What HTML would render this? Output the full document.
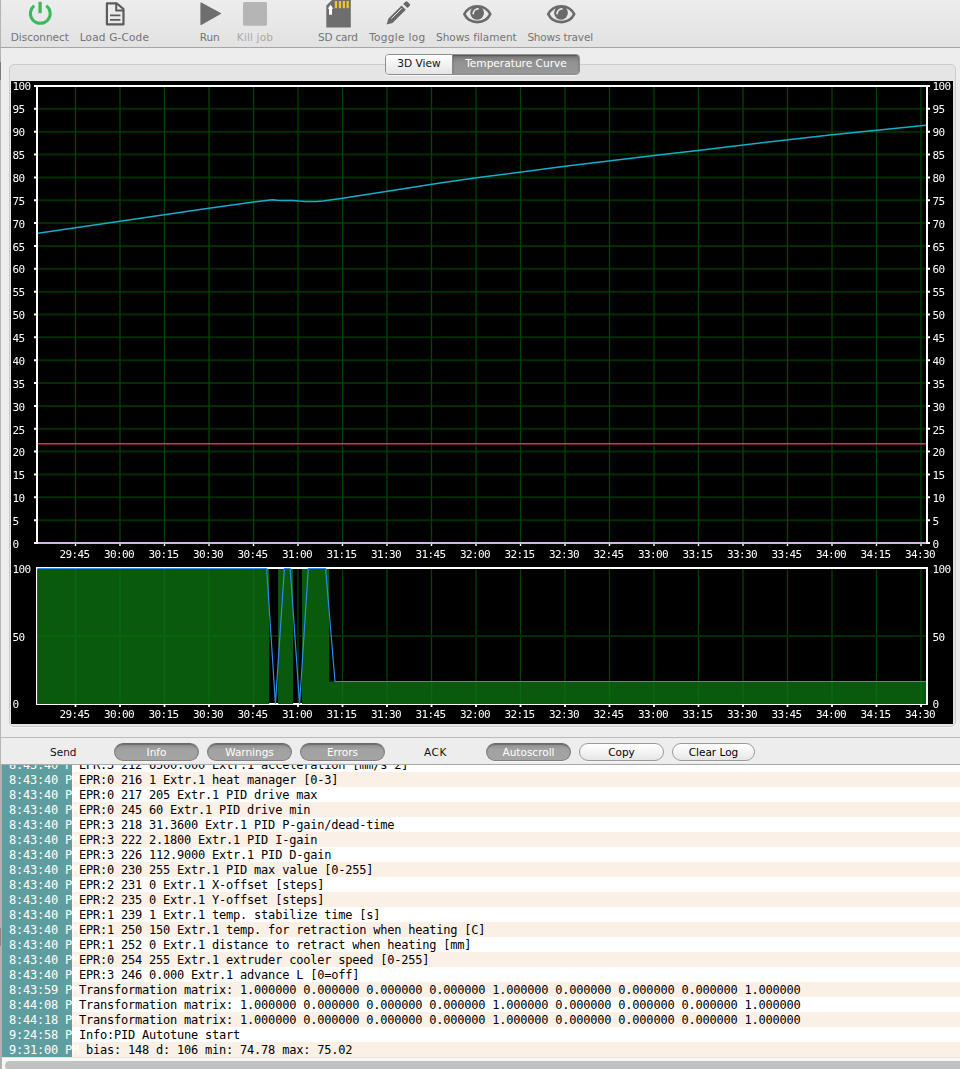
<!DOCTYPE html>
<html lang="en"><head><meta charset="utf-8"><title>Repetier-Host Temperature Curve</title>
<style>
html,body{margin:0;padding:0;}
body{width:960px;height:1069px;overflow:hidden;background:#ededed;position:relative;font-family:"DejaVu Sans", "Liberation Sans", sans-serif;font-size:10.5px;color:#000;}
.abs{position:absolute;}
#toolbar{left:0;top:0;width:960px;height:47px;background:linear-gradient(#ededed,#e2e2e2);border-bottom:1px solid #a6a6a6;}
#edge{left:0;top:0;width:1px;height:1069px;background:#b4b4b4;}
#edge3{left:0;top:62px;width:1px;height:18px;background:#7a7a7a;}
#edge4{left:0;top:928px;width:1px;height:18px;background:#858585;}
#edge2{left:0;top:764px;width:2px;height:305px;background:#b2b2b2;}
.tl{position:absolute;top:30px;height:14px;line-height:14px;white-space:nowrap;color:#747474;text-align:center;transform:translateX(-50%);}
.tl.dis{color:#a9a9a9;}
#group{left:9px;top:64px;width:945px;height:661px;border:1px solid #cbcbcb;border-radius:5px;background:#e5e5e5;box-shadow:0 1px 0 #f6f6f6;}
#seg{left:385px;top:54px;width:195px;height:21px;border-radius:4px;border:1px solid #8e8e8e;box-sizing:border-box;overflow:hidden;box-shadow:0 1px 0 rgba(255,255,255,.7);}
#seg .a{position:absolute;left:0;top:0;width:66px;height:19px;background:linear-gradient(#ffffff,#f2f2f2 50%,#e4e4e4);border-right:1px solid #8a8a8a;text-align:center;line-height:17px;font-size:10.6px;color:#111;}
#seg .b{position:absolute;left:67px;top:0;width:126px;height:19px;background:linear-gradient(#787878,#939393 40%,#989898);text-align:center;line-height:17px;font-size:10.6px;color:#fff;box-shadow:inset 0 1px 2px rgba(0,0,0,.35);}
#chart{left:11px;top:81px;width:942px;height:643px;background:#000;}
#sep{left:1px;top:737px;width:959px;height:1px;background:#bcbcbc;}
.pill{position:absolute;top:743px;height:18px;box-sizing:border-box;border-radius:9px;text-align:center;line-height:15px;padding-top:1px;font-size:10.5px;white-space:nowrap;}
.pill.on{background:linear-gradient(#8f8f8f,#a2a2a2 35%,#a4a4a4);border:1px solid #7e7e7e;border-top-color:#6a6a6a;color:#fff;box-shadow:inset 0 1px 1px rgba(0,0,0,.25),0 1px 0 rgba(255,255,255,.6);}
.pill.off{background:linear-gradient(#ffffff,#f4f4f4 50%,#e6e6e6);border:1px solid #9b9b9b;color:#000;box-shadow:0 1px 0 rgba(255,255,255,.6);}
.lbl{position:absolute;top:745px;height:14px;line-height:14px;white-space:nowrap;color:#111;}
#logtop{left:1px;top:764px;width:959px;height:1px;background:#a9a9a9;}
#log{left:2px;top:765px;width:958px;height:292px;overflow:hidden;background:#fff;}
.row{position:absolute;left:0;width:958px;height:15px;font-family:"DejaVu Sans Mono", "Liberation Mono", monospace;font-size:12px;letter-spacing:-0.22px;line-height:15px;white-space:pre;}
.row.p{background:#faf0e6;}
.row .t{position:absolute;left:0;top:0;width:70px;height:15px;background:#5f9ea0;}
.row .tt{position:absolute;left:7px;top:1px;color:#fff;}
.row .m{position:absolute;left:77px;top:1px;color:#000;}
#hs{left:1px;top:1057px;width:959px;height:12px;background:#f7f7f7;border-top:1px solid #e4e4e4;box-sizing:border-box;}
#hs i{position:absolute;left:4px;top:3px;width:970px;height:9px;border-radius:5px;background:#c1c1c1;}
</style></head><body>
<div class="abs" id="toolbar"></div>

<svg class="abs" style="left:0;top:0" width="960" height="48" viewBox="0 0 960 48">
 <!-- power -->
 <g fill="none" stroke="#3cb95e" stroke-width="3" stroke-linecap="butt">
  <path d="M34.3 5.6 A9.9 9.9 0 1 0 46.3 5.6"/>
  <path d="M40.1 1.8 V13.2" stroke-width="3.3"/>
 </g>
 <!-- document -->
 <g fill="none" stroke="#5c5c5c" stroke-width="2.2" stroke-linejoin="round">
  <path d="M106.9 3.4 H116.7 L123.5 9 V24.3 H106.9 Z"/>
  <path d="M116.2 3.4 V10.6 H123.5" stroke-width="2"/>
  <path d="M110 15.4 H120.4 M110 19.8 H120.4" stroke-width="1.7"/>
 </g>
 <!-- run -->
 <path d="M201 3 L220.4 13.6 L201 24.4 Z" fill="#6e6e6e" stroke="#6e6e6e" stroke-width="1.2" stroke-linejoin="round"/>
 <!-- kill -->
 <rect x="243" y="2" width="24" height="23.8" rx="1.5" fill="#b5b5b5"/>
 <!-- sd card -->
 <path d="M332 0 H350.8 V27.5 H326.3 V5.6 Z" fill="#6e6e6e"/>
 <g fill="#f1c232">
  <rect x="334.8" y="1" width="2.3" height="7.2"/><rect x="338.8" y="1" width="2.3" height="7.2"/>
  <rect x="342.7" y="1" width="2.3" height="7.2"/><rect x="346.5" y="1" width="2.3" height="7.2"/>
 </g>
 <path d="M330.5 4.7 L333.3 8.8 H332 V14.8 H329 V8.8 H327.8 Z" fill="#fff"/>
 <!-- pencil -->
 <g transform="translate(386.7 24.6) rotate(-45)">
  <path d="M0 0 L5.2 -3 H24 V3 H5.2 Z" fill="#686868"/>
  <path d="M26.3 -3 H29.4 Q30.9 -3 30.9 -1.5 V1.5 Q30.9 3 29.4 3 H26.3 Z" fill="#686868"/>
  <path d="M7.5 -0.9 H22.3" stroke="#f2f2f2" stroke-width="0.9"/>
 </g>
 <!-- eyes -->
 <g id="eye1">
  <path d="M464.3 14.15 A14.6 14.6 0 0 1 490.3 14.15 A14.6 14.6 0 0 1 464.3 14.15 Z" fill="none" stroke="#6a6a6a" stroke-width="2.6" stroke-linejoin="round"/>
  <circle cx="477.1" cy="12.8" r="6.9" fill="#6a6a6a"/>
  <path d="M473.2 13.6 A5 5 0 0 1 478 8.9" fill="none" stroke="#ededed" stroke-width="1.7" stroke-linecap="round"/>
 </g>
 <g transform="translate(83.9 0)">
  <path d="M464.3 14.15 A14.6 14.6 0 0 1 490.3 14.15 A14.6 14.6 0 0 1 464.3 14.15 Z" fill="none" stroke="#6a6a6a" stroke-width="2.6" stroke-linejoin="round"/>
  <circle cx="477.1" cy="12.8" r="6.9" fill="#6a6a6a"/>
  <path d="M473.2 13.6 A5 5 0 0 1 478 8.9" fill="none" stroke="#ededed" stroke-width="1.7" stroke-linecap="round"/>
 </g>
</svg>

<div class="tl" style="left:39.78px;letter-spacing:-0.03px">Disconnect</div><div class="tl" style="left:114.4px;letter-spacing:0.19px">Load G-Code</div><div class="tl" style="left:209.65px;letter-spacing:-0.2px">Run</div><div class="tl dis" style="left:254.98px;letter-spacing:0.16px">Kill job</div><div class="tl" style="left:337.9px;letter-spacing:-0.2px">SD card</div><div class="tl" style="left:397.37px;letter-spacing:0.33px">Toggle log</div><div class="tl" style="left:476.35px;letter-spacing:0.01px">Shows filament</div><div class="tl" style="left:560.16px;letter-spacing:-0.17px">Shows travel</div>
<div class="abs" id="group"></div>
<div class="abs" id="seg"><div class="a">3D View</div><div class="b">Temperature Curve</div></div>
<svg class="abs" id="chart" width="942" height="643" viewBox="11 81 942 643" font-family='"DejaVu Sans Mono","Liberation Mono",monospace' font-size="11" letter-spacing="-0.6" fill="#fff">
<path d="M38 108.85H926M38 131.7H926M38 154.55H926M38 177.4H926M38 200.25H926M38 223.1H926M38 245.95H926M38 268.8H926M38 291.65H926M38 314.5H926M38 337.35H926M38 360.2H926M38 383.05H926M38 405.9H926M38 428.75H926M38 451.6H926M38 474.45H926M38 497.3H926M38 520.15H926" stroke="#002e00" stroke-width="2" fill="none"/>
<path d="M75.5 87V542M120 87V542M164.5 87V542M209 87V542M253.5 87V542M298 87V542M342.5 87V542M387 87V542M431.5 87V542M476 87V542M520.5 87V542M565 87V542M609.5 87V542M654 87V542M698.5 87V542M743 87V542M787.5 87V542M832 87V542M876.5 87V542M921 87V542" stroke="#004200" stroke-width="1.3" fill="none"/>
<path d="M38 443.8H926" stroke="#df2f5f" stroke-width="1.6" fill="none"/>
<polyline points="38,233.3 120,221.3 200,209.4 253.75,202 268,200.2 272.5,199.8 277,200.2 282.5,200.5 292.5,200.5 299,201.1 305,201.5 316.25,201.5 323,200.9 330,200 342.5,198.25 387.5,191.25 440,183.1 476.6,177.7 565.1,166.3 654,155.5 700,150.2 743.3,145 832.2,134.7 926,125.2" stroke="#13afc9" stroke-width="1.5" fill="none" stroke-linejoin="round"/>
<path d="M34 86H930M37 85V544M927 85V544" stroke="#fff" stroke-width="2" fill="none"/>
<path d="M38 543H926" stroke="#d3b3ec" stroke-width="2" fill="none"/>
<path d="M34 108.85H36M928 108.85H930M34 131.7H36M928 131.7H930M34 154.55H36M928 154.55H930M34 177.4H36M928 177.4H930M34 200.25H36M928 200.25H930M34 223.1H36M928 223.1H930M34 245.95H36M928 245.95H930M34 268.8H36M928 268.8H930M34 291.65H36M928 291.65H930M34 314.5H36M928 314.5H930M34 337.35H36M928 337.35H930M34 360.2H36M928 360.2H930M34 383.05H36M928 383.05H930M34 405.9H36M928 405.9H930M34 428.75H36M928 428.75H930M34 451.6H36M928 451.6H930M34 474.45H36M928 474.45H930M34 497.3H36M928 497.3H930M34 520.15H36M928 520.15H930M34 543H36M928 543H930" stroke="#fff" stroke-width="2" fill="none"/>
<path d="M75.5 544V546M120 544V546M164.5 544V546M209 544V546M253.5 544V546M298 544V546M342.5 544V546M387 544V546M431.5 544V546M476 544V546M520.5 544V546M565 544V546M609.5 544V546M654 544V546M698.5 544V546M743 544V546M787.5 544V546M832 544V546M876.5 544V546M921 544V546" stroke="#fff" stroke-width="1.4" fill="none"/>
<path d="M75.5 569V703M120 569V703M164.5 569V703M209 569V703M253.5 569V703M298 569V703M342.5 569V703M387 569V703M431.5 569V703M476 569V703M520.5 569V703M565 569V703M609.5 569V703M654 569V703M698.5 569V703M743 569V703M787.5 569V703M832 569V703M876.5 569V703M921 569V703" stroke="#004200" stroke-width="1.3" fill="none"/>
<path d="M38 636H926" stroke="#002e00" stroke-width="2" fill="none"/>
<path d="M37.5 569 H269.2 V704 H37.5Z M278.1 569 H293.1 V704 H278.1Z M302 569 H329.2 V681.5 H926.6 V704 H302Z" fill="rgba(13,115,18,0.78)"/>
<path d="M36 568H928M927 567V705" stroke="#fff" stroke-width="2" fill="none"/>
<path d="M36.6 567V705M36 704.5H928" stroke="#fff" stroke-width="1.2" fill="none"/>
<path d="M269.2 703.5H278.1M293.1 703.5H302" stroke="#fff" stroke-width="1" fill="none"/>
<path d="M75.5 705V707M120 705V707M164.5 705V707M209 705V707M253.5 705V707M298 705V707M342.5 705V707M387 705V707M431.5 705V707M476 705V707M520.5 705V707M565 705V707M609.5 705V707M654 705V707M698.5 705V707M743 705V707M787.5 705V707M832 705V707M876.5 705V707M921 705V707" stroke="#fff" stroke-width="1.8" fill="none"/>
<polyline points="37.5,568.5 266.7,568.5 275.4,704 284.4,568.5 290.2,568.5 299.6,704 308.3,568.5 325.6,568.5 335,681.5 926,681.5" stroke="#2a8cec" stroke-width="1.2" fill="none" stroke-linejoin="miter"/>
<g style="filter:grayscale(1)">
<text x="12.4" y="90">100</text><text x="932.4" y="90">100</text>
<text x="12.4" y="113">95</text><text x="932.4" y="113">95</text>
<text x="12.4" y="136">90</text><text x="932.4" y="136">90</text>
<text x="12.4" y="159">85</text><text x="932.4" y="159">85</text>
<text x="12.4" y="182">80</text><text x="932.4" y="182">80</text>
<text x="12.4" y="205">75</text><text x="932.4" y="205">75</text>
<text x="12.4" y="228">70</text><text x="932.4" y="228">70</text>
<text x="12.4" y="251">65</text><text x="932.4" y="251">65</text>
<text x="12.4" y="273">60</text><text x="932.4" y="273">60</text>
<text x="12.4" y="296">55</text><text x="932.4" y="296">55</text>
<text x="12.4" y="319">50</text><text x="932.4" y="319">50</text>
<text x="12.4" y="342">45</text><text x="932.4" y="342">45</text>
<text x="12.4" y="365">40</text><text x="932.4" y="365">40</text>
<text x="12.4" y="388">35</text><text x="932.4" y="388">35</text>
<text x="12.4" y="411">30</text><text x="932.4" y="411">30</text>
<text x="12.4" y="434">25</text><text x="932.4" y="434">25</text>
<text x="12.4" y="456">20</text><text x="932.4" y="456">20</text>
<text x="12.4" y="479">15</text><text x="932.4" y="479">15</text>
<text x="12.4" y="502">10</text><text x="932.4" y="502">10</text>
<text x="12.4" y="525">5</text><text x="932.4" y="525">5</text>
<text x="12.4" y="548">0</text><text x="932.4" y="548">0</text>
<text x="74.5" y="558" text-anchor="middle">29:45</text>
<text x="119" y="558" text-anchor="middle">30:00</text>
<text x="163.5" y="558" text-anchor="middle">30:15</text>
<text x="208" y="558" text-anchor="middle">30:30</text>
<text x="252.5" y="558" text-anchor="middle">30:45</text>
<text x="297" y="558" text-anchor="middle">31:00</text>
<text x="341.5" y="558" text-anchor="middle">31:15</text>
<text x="386" y="558" text-anchor="middle">31:30</text>
<text x="430.5" y="558" text-anchor="middle">31:45</text>
<text x="475" y="558" text-anchor="middle">32:00</text>
<text x="519.5" y="558" text-anchor="middle">32:15</text>
<text x="564" y="558" text-anchor="middle">32:30</text>
<text x="608.5" y="558" text-anchor="middle">32:45</text>
<text x="653" y="558" text-anchor="middle">33:00</text>
<text x="697.5" y="558" text-anchor="middle">33:15</text>
<text x="742" y="558" text-anchor="middle">33:30</text>
<text x="786.5" y="558" text-anchor="middle">33:45</text>
<text x="831" y="558" text-anchor="middle">34:00</text>
<text x="875.5" y="558" text-anchor="middle">34:15</text>
<text x="920" y="558" text-anchor="middle">34:30</text>
<text x="12.4" y="573">100</text><text x="932.4" y="573">100</text>
<text x="12.4" y="641">50</text><text x="932.4" y="641">50</text>
<text x="12.4" y="708">0</text><text x="932.4" y="708">0</text>
<text x="74.5" y="718" text-anchor="middle">29:45</text>
<text x="119" y="718" text-anchor="middle">30:00</text>
<text x="163.5" y="718" text-anchor="middle">30:15</text>
<text x="208" y="718" text-anchor="middle">30:30</text>
<text x="252.5" y="718" text-anchor="middle">30:45</text>
<text x="297" y="718" text-anchor="middle">31:00</text>
<text x="341.5" y="718" text-anchor="middle">31:15</text>
<text x="386" y="718" text-anchor="middle">31:30</text>
<text x="430.5" y="718" text-anchor="middle">31:45</text>
<text x="475" y="718" text-anchor="middle">32:00</text>
<text x="519.5" y="718" text-anchor="middle">32:15</text>
<text x="564" y="718" text-anchor="middle">32:30</text>
<text x="608.5" y="718" text-anchor="middle">32:45</text>
<text x="653" y="718" text-anchor="middle">33:00</text>
<text x="697.5" y="718" text-anchor="middle">33:15</text>
<text x="742" y="718" text-anchor="middle">33:30</text>
<text x="786.5" y="718" text-anchor="middle">33:45</text>
<text x="831" y="718" text-anchor="middle">34:00</text>
<text x="875.5" y="718" text-anchor="middle">34:15</text>
<text x="920" y="718" text-anchor="middle">34:30</text>
</g>
</svg>
<div class="abs" id="sep"></div>
<div class="lbl" style="left:50px">Send</div>
<div class="lbl" style="left:424px;letter-spacing:0.6px">ACK</div>
<div class="pill on" style="left:114px;width:85px">Info</div><div class="pill on" style="left:207px;width:85px">Warnings</div><div class="pill on" style="left:300px;width:85px">Errors</div><div class="pill on" style="left:486px;width:85px">Autoscroll</div><div class="pill off" style="left:579px;width:85px">Copy</div><div class="pill off" style="left:672px;width:83px">Clear Log</div>
<div class="abs" id="logtop"></div>
<div class="abs" id="log">
<div class="row" style="top:-8px"><span class="t"></span><span class="tt">8:43:40 PM</span><span class="m">EPR:3 212 6500.000 Extr.1 acceleration [mm/s^2]</span></div>
<div class="row p" style="top:7px"><span class="t"></span><span class="tt">8:43:40 PM</span><span class="m">EPR:0 216 1 Extr.1 heat manager [0-3]</span></div>
<div class="row" style="top:22px"><span class="t"></span><span class="tt">8:43:40 PM</span><span class="m">EPR:0 217 205 Extr.1 PID drive max</span></div>
<div class="row p" style="top:37px"><span class="t"></span><span class="tt">8:43:40 PM</span><span class="m">EPR:0 245 60 Extr.1 PID drive min</span></div>
<div class="row" style="top:52px"><span class="t"></span><span class="tt">8:43:40 PM</span><span class="m">EPR:3 218 31.3600 Extr.1 PID P-gain/dead-time</span></div>
<div class="row p" style="top:67px"><span class="t"></span><span class="tt">8:43:40 PM</span><span class="m">EPR:3 222 2.1800 Extr.1 PID I-gain</span></div>
<div class="row" style="top:82px"><span class="t"></span><span class="tt">8:43:40 PM</span><span class="m">EPR:3 226 112.9000 Extr.1 PID D-gain</span></div>
<div class="row p" style="top:97px"><span class="t"></span><span class="tt">8:43:40 PM</span><span class="m">EPR:0 230 255 Extr.1 PID max value [0-255]</span></div>
<div class="row" style="top:112px"><span class="t"></span><span class="tt">8:43:40 PM</span><span class="m">EPR:2 231 0 Extr.1 X-offset [steps]</span></div>
<div class="row p" style="top:127px"><span class="t"></span><span class="tt">8:43:40 PM</span><span class="m">EPR:2 235 0 Extr.1 Y-offset [steps]</span></div>
<div class="row" style="top:142px"><span class="t"></span><span class="tt">8:43:40 PM</span><span class="m">EPR:1 239 1 Extr.1 temp. stabilize time [s]</span></div>
<div class="row p" style="top:157px"><span class="t"></span><span class="tt">8:43:40 PM</span><span class="m">EPR:1 250 150 Extr.1 temp. for retraction when heating [C]</span></div>
<div class="row" style="top:172px"><span class="t"></span><span class="tt">8:43:40 PM</span><span class="m">EPR:1 252 0 Extr.1 distance to retract when heating [mm]</span></div>
<div class="row p" style="top:187px"><span class="t"></span><span class="tt">8:43:40 PM</span><span class="m">EPR:0 254 255 Extr.1 extruder cooler speed [0-255]</span></div>
<div class="row" style="top:202px"><span class="t"></span><span class="tt">8:43:40 PM</span><span class="m">EPR:3 246 0.000 Extr.1 advance L [0=off]</span></div>
<div class="row p" style="top:217px"><span class="t"></span><span class="tt">8:43:59 PM</span><span class="m">Transformation matrix: 1.000000 0.000000 0.000000 0.000000 1.000000 0.000000 0.000000 0.000000 1.000000</span></div>
<div class="row" style="top:232px"><span class="t"></span><span class="tt">8:44:08 PM</span><span class="m">Transformation matrix: 1.000000 0.000000 0.000000 0.000000 1.000000 0.000000 0.000000 0.000000 1.000000</span></div>
<div class="row p" style="top:247px"><span class="t"></span><span class="tt">8:44:18 PM</span><span class="m">Transformation matrix: 1.000000 0.000000 0.000000 0.000000 1.000000 0.000000 0.000000 0.000000 1.000000</span></div>
<div class="row" style="top:262px"><span class="t"></span><span class="tt">9:24:58 PM</span><span class="m">Info:PID Autotune start</span></div>
<div class="row p" style="top:277px"><span class="t"></span><span class="tt">9:31:00 PM</span><span class="m"> bias: 148 d: 106 min: 74.78 max: 75.02</span></div>
</div>
<div class="abs" id="hs"><i></i></div>
<div class="abs" id="edge"></div><div class="abs" id="edge2"></div><div class="abs" id="edge3"></div><div class="abs" id="edge4"></div>
</body></html>
